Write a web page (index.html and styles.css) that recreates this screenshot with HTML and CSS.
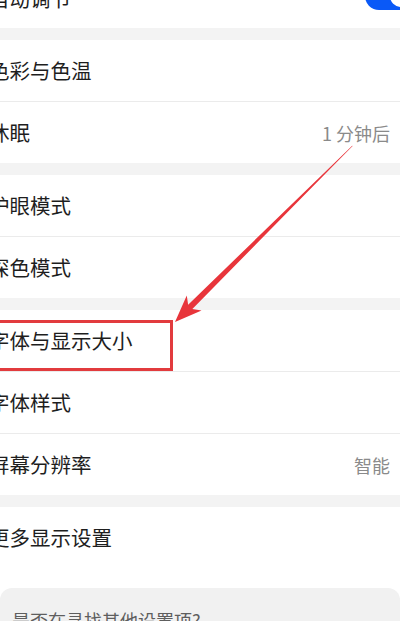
FILE: index.html
```html
<!DOCTYPE html>
<html lang="zh-CN">
<head>
<meta charset="utf-8">
<title>显示设置</title>
<link rel="stylesheet" href="styles.css">
</head>
<body>
<div class="page">
  <div class="group group-top">
    <div class="row row-top">
      <span class="label">自动调节</span>
      <span class="toggle"><span class="knob"></span></span>
    </div>
  </div>
  <div class="gap"></div>
  <div class="group">
    <div class="row">
      <span class="label">色彩与色温</span>
      <span class="chev"></span>
    </div>
    <div class="row">
      <span class="label">休眠</span>
      <span class="right"><span class="value">1 分钟后</span><span class="chev"></span></span>
    </div>
  </div>
  <div class="gap"></div>
  <div class="group">
    <div class="row">
      <span class="label">护眼模式</span>
      <span class="chev"></span>
    </div>
    <div class="row">
      <span class="label">深色模式</span>
      <span class="chev"></span>
    </div>
  </div>
  <div class="gap"></div>
  <div class="group">
    <div class="row">
      <span class="label">字体与显示大小</span>
      <span class="chev"></span>
    </div>
    <div class="row">
      <span class="label">字体样式</span>
      <span class="chev"></span>
    </div>
    <div class="row">
      <span class="label">屏幕分辨率</span>
      <span class="right"><span class="value">智能</span><span class="chev"></span></span>
    </div>
  </div>
  <div class="gap"></div>
  <div class="group group-last">
    <div class="row">
      <span class="label">更多显示设置</span>
      <span class="chev"></span>
    </div>
  </div>
  <div class="card">
    <span class="card-text">是否在寻找其他设置项?</span>
    <span class="card-icon">
      <svg width="16" height="10" viewBox="0 0 16 10"><path d="M1 8 C2 1 6 1 7.5 5 C9 1 13 1 15 8" fill="none" stroke="#d0d0d0" stroke-width="1.5"/></svg>
    </span>
  </div>

  <div class="highlight"></div>
  <svg class="arrow" width="400" height="621" viewBox="0 0 400 621">
    <g transform="translate(175 322) rotate(-44.8)">
      <polygon points="0,0 27,-10.5 21.5,-3 250,-0.3 250,0.3 21.5,3 27,10.5" fill="#e8353b"/>
    </g>
  </svg>
</div>
</body>
</html>
```

FILE: styles.css
```css
html, body {
  margin: 0;
  padding: 0;
  background: #ffffff;
}

.page {
  position: relative;
  width: 400px;
  height: 621px;
  overflow: hidden;
  background: #ffffff;
  font-family: "Noto Sans CJK SC", "Noto Sans", sans-serif;
}

.group {
  background: #ffffff;
  display: flex;
  flex-direction: column;
}

.group-top {
  margin-top: -32px;
}

.gap {
  height: 12px;
  background: #f3f3f3;
}

.row {
  height: 61px;
  display: flex;
  align-items: center;
  justify-content: space-between;
  border-bottom: 1px solid #ebebeb;
}

.row:last-child {
  border-bottom: none;
}

.row-top {
  height: 60px;
}

.group-last {
  padding-bottom: 20px;
}

.label {
  margin-left: -11px;
  font-size: 20.5px;
  line-height: 1;
  color: #1e1e1e;
  white-space: nowrap;
}

.right {
  display: flex;
  align-items: center;
}

.value {
  font-size: 18px;
  line-height: 1;
  color: #8a8a8a;
  white-space: nowrap;
}

.chev {
  width: 12px;
  height: 20px;
  margin-right: -9px;
  margin-left: 5px;
  border-left: 2px solid transparent;
  position: relative;
}

.chev::before {
  content: "";
  position: absolute;
  left: 0;
  top: 4px;
  width: 9px;
  height: 9px;
  border-top: 1.5px solid #d4d4d4;
  border-right: 1.5px solid #d4d4d4;
  transform: rotate(45deg);
}

.toggle {
  position: relative;
  width: 50px;
  height: 28px;
  border-radius: 14px;
  background: #0a59f7;
  margin-right: -15px;
  margin-top: -4px;
}

.knob {
  position: absolute;
  right: 3px;
  top: 3px;
  width: 22px;
  height: 22px;
  border-radius: 50%;
  background: #ffffff;
}

.card {
  height: 60px;
  background: #f1f1f1;
  border-radius: 12px 12px 0 0;
  display: flex;
  justify-content: space-between;
  align-items: flex-start;
  padding: 22px 16px 0 12px;
}

.card-text {
  font-size: 18px;
  line-height: 1.2;
  color: #5e5e5e;
  white-space: nowrap;
}

.card-icon {
  margin-top: 26px;
  margin-right: 2px;
}

.highlight {
  position: absolute;
  left: -3px;
  top: 320px;
  width: 170px;
  height: 45px;
  border: 3px solid #e23b3e;
}

.arrow {
  position: absolute;
  left: 0;
  top: 0;
  pointer-events: none;
}
```
